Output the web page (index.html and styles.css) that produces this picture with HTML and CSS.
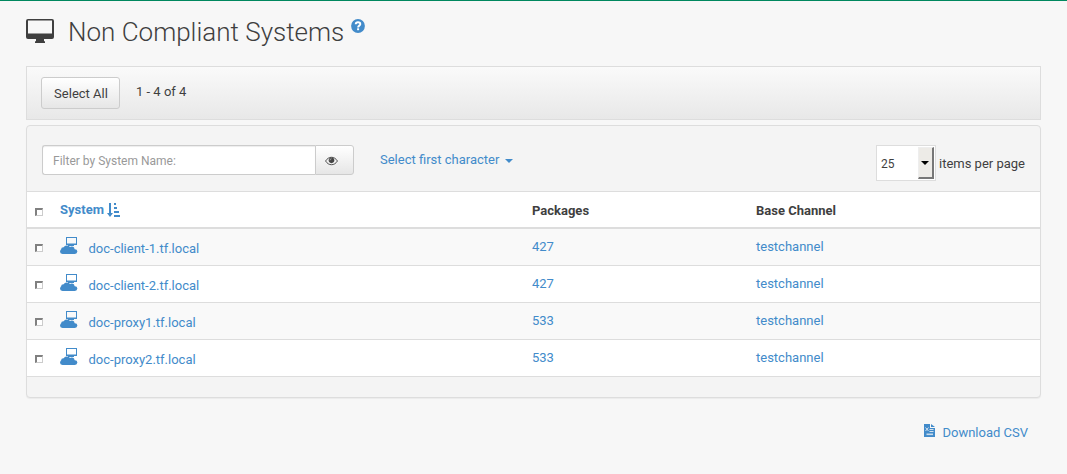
FILE: index.html
```html
<!DOCTYPE html>
<html lang="en">
<head>
<meta charset="utf-8">
<title>Non Compliant Systems</title>
<link rel="stylesheet" href="styles.css">
</head>
<body>
<svg class="defs" aria-hidden="true">
  <symbol id="system" viewBox="0 0 18 18">
    <path fill-rule="evenodd" d="M6 0h11v8h-3v1H8V8H6zM7 1v5.500h9V1z"/>
    <circle cx="6.900" cy="11.900" r="3.500"/>
    <circle cx="3.400" cy="12.600" r="2.300"/>
    <circle cx="11.800" cy="12.200" r="2.700"/>
    <circle cx="14.900" cy="14.600" r="2.400"/>
    <circle cx="2.400" cy="14.600" r="2.400"/>
    <path d="M2.400 12.500h12.500V17H2.400z"/>
  </symbol>
</svg>
<main class="page">
  <h1 class="title">
    <svg class="title-icon" viewBox="0 0 28 24"><path fill-rule="evenodd" d="M2 0h24a2 2 0 0 1 2 2v16a2 2 0 0 1-2 2h-8v2.200h1v1.800H9v-1.800h1V20H2a2 2 0 0 1-2-2V2a2 2 0 0 1 2-2zM2 1.500v13h24v-13z"/></svg>
    <span class="title-text">Non Compliant Systems</span>
    <svg class="help" viewBox="0 0 14 14"><circle cx="7" cy="7" r="6.900" fill="#428bca"/><path d="M4.700 5.200C4.800 3.800 5.800 3.300 7 3.300c1.300 0 2.300.7 2.300 1.900C9.300 6.600 7.100 6.700 7.100 8.400" fill="none" stroke="#fff" stroke-width="1.900"/><path d="M6.100 9.300h2v1.900h-2z" fill="#fff"/></svg>
  </h1>
  <div class="toolbar">
    <button class="btn select-all">Select All</button>
    <span class="range">1 - 4 of 4</span>
  </div>
  <section class="panel">
    <div class="panel-head">
      <div class="filter">
        <input class="filter-input" type="text" placeholder="Filter by System Name:">
        <button class="btn filter-btn" aria-label="Filter"><svg class="eye" viewBox="0 0 14 10"><path d="M.6 5C2.300 2.300 4.500 1 7 1s4.700 1.300 6.400 4C11.700 7.700 9.500 9 7 9S2.300 7.700.6 5z" fill="none" stroke="#444" stroke-width="1"/><circle cx="7" cy="4.300" r="3" fill="#444"/><path d="M5.300 4.300A1.700 1.700 0 0 1 7 2.600" fill="none" stroke="#eee" stroke-width=".6"/></svg></button>
      </div>
      <a class="first-char">Select first character<span class="caret"></span></a>
      <div class="per-page">
        <span class="select"><span class="select-value">25</span><span class="select-arrow"><span class="triangle"></span></span></span>
        <span class="per-page-label">items per page</span>
      </div>
    </div>
    <div class="row head">
      <span class="check"></span>
      <a class="sort">System<svg class="sort-icon" viewBox="0 0 13 14"><path d="M2 0h2v10h2l-3 4-3-4h2zM7 0h2v2H7zM7 4h3v2H7zM7 8h5v2H7zM7 12h6v2H7z"/></svg></a>
      <span>Packages</span><span>Base Channel</span>
    </div>
    <div class="row odd"><span class="check"></span><a class="name"><svg class="sys"><use href="#system"/></svg><span>doc-client-1.tf.local</span></a><a>427</a><a>testchannel</a></div>
    <div class="row"><span class="check"></span><a class="name"><svg class="sys"><use href="#system"/></svg><span>doc-client-2.tf.local</span></a><a>427</a><a>testchannel</a></div>
    <div class="row odd"><span class="check"></span><a class="name"><svg class="sys"><use href="#system"/></svg><span>doc-proxy1.tf.local</span></a><a>533</a><a>testchannel</a></div>
    <div class="row"><span class="check"></span><a class="name"><svg class="sys"><use href="#system"/></svg><span>doc-proxy2.tf.local</span></a><a>533</a><a>testchannel</a></div>
    <div class="panel-foot"></div>
  </section>
  <a class="download"><svg class="csv" viewBox="0 0 11 13"><path d="M0 0h6v4h5v9H0zM7 0l4 3H7z"/><path d="M1.500 3.500l3 3.500M4.500 3.500l-3 3.500M5.500 5.500h4M5.500 7.500h4" fill="none" stroke="#f7f7f7" stroke-width=".8"/><path d="M2.500 9.500h6.500v1.600H2.500z" fill="#f7f7f7" opacity=".75"/></svg>Download CSV</a>
</main>
</body>
</html>
```

FILE: styles.css
```css
* { box-sizing: border-box; }
body {
  margin: 0;
  height: 474px;
  border-top: 1px solid #00885f;
  background: #f7f7f7;
  color: #3f3f3f;
  font: 13px/18px Roboto, sans-serif;
  overflow: hidden;
}
a { color: #428bca; text-decoration: none; }
svg { flex: none; display: block; fill: currentColor; }
.defs { display: none; }
.page { padding: 0 26px; }
.title {
  display: flex;
  align-items: flex-start;
  height: 65px;
  margin: 0;
  padding-top: 14px;
  font-size: 26px;
  line-height: 34px;
  font-weight: 300;
}
.title-icon { width: 28px; height: 24px; margin: 4px 14px 0 0; }
.title-text { width: 276px; white-space: nowrap; }
.help { width: 14px; height: 14px; margin: 4px 0 0 7px; }
.btn {
  border: 1px solid #ccc;
  border-radius: 3px;
  background: linear-gradient(#fff, #e6e6e6);
  color: #3f3f3f;
  font: 13px/18px Roboto, sans-serif;
  padding: 0;
}
.toolbar {
  display: flex;
  width: 1015px;
  height: 54px;
  padding: 10px 14px;
  border: 1px solid #ddd;
  background: linear-gradient(#fafafa, #e8e8e8);
}
.select-all { width: 79px; height: 32px; padding: 2px 0 0 1px; }
.range { margin: 6px 0 0 16px; }
.panel {
  width: 1015px;
  height: 273px;
  margin-top: 5px;
  border: 1px solid #ddd;
  border-radius: 4px;
  background: #f4f4f4;
  box-shadow: 0 1px 1px rgba(0, 0, 0, .05);
}
.panel-head {
  display: flex;
  height: 66px;
  padding: 19px 15px 0;
  border-bottom: 1px solid #ddd;
}
.filter { display: flex; height: 30px; }
.filter-input {
  width: 273px;
  padding: 2px 10px 0;
  border: 1px solid #ccc;
  border-right: 0;
  border-radius: 3px 0 0 3px;
  background: #fff;
  box-shadow: inset 0 1px 1px rgba(0, 0, 0, .075);
  font: 12px Roboto, sans-serif;
}
.filter-input::placeholder { color: #999; }
.filter-btn { width: 39px; padding: 2px 0 0 9px; border-radius: 0 3px 3px 0; }
.eye { width: 13px; height: 10px; }
.first-char { margin: 6px 0 0 26px; display: flex; height: 18px; }
.caret { width: 0; height: 0; margin: 8px 0 0 6px; border: 4px solid transparent; border-top-color: #428bca; border-bottom: 0; }
.per-page { display: flex; margin-left: auto; align-items: center; height: 36px; gap: 3px; }
.per-page-label { padding-top: 2px; }
.select { display: flex; width: 60px; height: 36px; border: 1px solid #ddd; background: #fff; padding: 1px; }
.select-value { width: 40px; padding: 8px 0 0 3px; font-size: 12px; }
.select-arrow { display: flex; width: 16px; height: 32px; align-items: center; justify-content: center; background: #edebe7; border: 1px solid #eee; border-right: 2px solid #777; border-bottom: 2px solid #777; }
.triangle { border: 4px solid transparent; border-top-color: #000; border-bottom: 0; }
.row {
  display: grid;
  grid-template-columns: 33px 472px 224px 1fr;
  height: 37px;
  padding-top: 9px;
  border-bottom: 1px solid #ddd;
  background: #fff;
}
.row.head { padding-top: 10px; border-bottom-width: 2px; font-weight: 700; }
.row.odd { background: #f9f9f9; }
.check { width: 8px; height: 8px; margin: 6px 0 0 8px; border: 1px solid #ccc; border-top: 2px solid #808080; border-left: 2px solid #808080; background: #fff; }
.sort { display: flex; margin-top: -1px; }
.sort-icon { width: 13px; height: 14px; margin: 2px 0 0 3px; }
.name { display: flex; }
.name span { margin: 2px 0 0 10.5px; }
.sys { width: 18px; height: 18px; margin-top: -1px; }
.panel-foot { height: 20px; }
.download { display: flex; width: max-content; margin: 26px 13px 0 auto; }
.csv { width: 11px; height: 13px; margin: 0 7px 0 0; }
```
